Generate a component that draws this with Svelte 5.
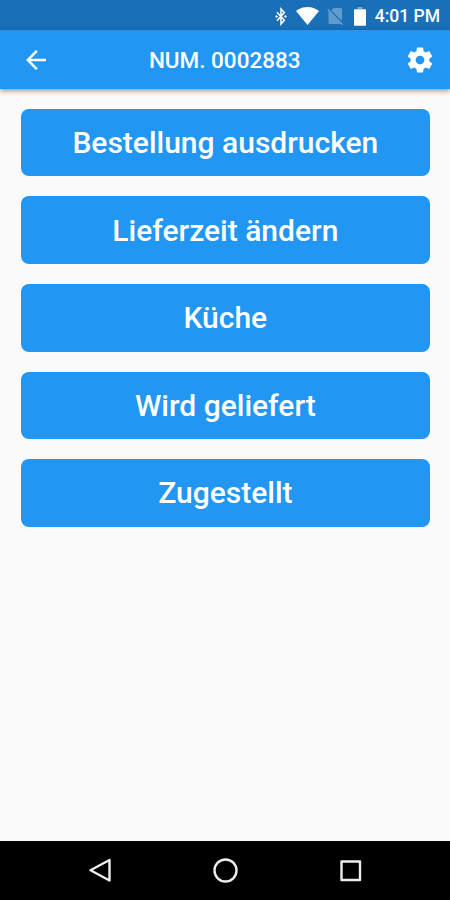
<script lang="ts">
  const orderNumber = '0002883';
  const actions = [
    'Bestellung ausdrucken',
    'Lieferzeit ändern',
    'Küche',
    'Wird geliefert',
    'Zugestellt',
  ];
</script>

<div class="screen">
  <div class="status-bar">
    <svg class="bluetooth" viewBox="0 0 12 19">
      <path class="rune" d="M2 5.2l7.3 8L6 17V2l3.3 3.6L2 13.8" />
      <path d="M1.6 8.1L3 9.5 1.6 10.9.2 9.5zM10.4 8.1l1.4 1.4-1.4 1.4L9 9.5z" />
    </svg>
    <svg class="wifi" viewBox="0 0 24 20" preserveAspectRatio="none">
      <path d="M12 20L24 4.5C23.5 4.1 19 0 12 0S.5 4.1 0 4.5L12 20z" />
    </svg>
    <svg class="no-sim" viewBox="0 0 16 19">
      <path d="M6.5 1H14a1 1 0 0 1 1 1v12L4.2 3.3zM1.5 3.6L14 16.2V17H2.5a1 1 0 0 1-1-1z" />
      <path d="M1.2 1.8L.2 2.8l15 15.4 1-1z" />
    </svg>
    <svg class="battery" viewBox="0 0 12 20">
      <path class="cap" d="M3.5 1h5v2H12v1H0V3h3.500z" />
      <path d="M0 3.500h12V19a.8.8 0 0 1-.8.800H.8A.8.8 0 0 1 0 19z" />
    </svg>
    <span class="clock">4:01 PM</span>
  </div>

  <header>
    <button class="icon-btn" aria-label="Zurück">
      <svg viewBox="0 0 24 24">
        <path d="M20 11H7.83l5.59-5.59L12 4l-8 8 8 8 1.41-1.41L7.83 13H20v-2z" />
      </svg>
    </button>
    <h1>NUM. {orderNumber}</h1>
    <button class="icon-btn" aria-label="Einstellungen">
      <svg viewBox="0 0 24 24">
        <path d="M19.43 12.98c.04-.32.07-.64.07-.98s-.03-.66-.07-.98l2.11-1.65c.19-.15.24-.42.12-.64l-2-3.46c-.12-.22-.39-.3-.61-.22l-2.49 1c-.52-.4-1.08-.73-1.69-.98l-.38-2.65C14.46 2.18 14.25 2 14 2h-4c-.25 0-.46.18-.49.42l-.38 2.65c-.61.25-1.17.59-1.69.98l-2.49-1c-.23-.09-.49 0-.61.22l-2 3.46c-.13.22-.07.49.12.64l2.11 1.65c-.04.32-.07.65-.07.98s.03.66.07.98l-2.11 1.65c-.19.15-.24.42-.12.64l2 3.46c.12.22.39.3.61.22l2.49-1c.52.4 1.08.73 1.69.98l.38 2.65c.03.24.24.42.49.42h4c.25 0 .46-.18.49-.42l.38-2.65c.61-.25 1.17-.59 1.69-.98l2.49 1c.23.09.49 0 .61-.22l2-3.46c.12-.22.07-.49-.12-.64l-2.11-1.65zM12 15.5c-1.93 0-3.5-1.57-3.5-3.5s1.57-3.5 3.5-3.5 3.5 1.57 3.5 3.5-1.57 3.5-3.5 3.5z" />
      </svg>
    </button>
  </header>

  <main>
    {#each actions as action}
      <button class="action">{action}</button>
    {/each}
  </main>

  <nav>
    <svg viewBox="0 0 26 26"><path d="M22.500 3v20.500L3.500 13.200z" /></svg>
    <svg viewBox="0 0 26 26"><circle cx="13.500" cy="13.500" r="11" /></svg>
    <svg viewBox="0 0 26 26"><rect x="4.500" y="4.500" width="18.500" height="18.500" /></svg>
  </nav>
</div>

<style>
  :global(body) {
    margin: 0;
  }
  .screen {
    display: flex;
    flex-direction: column;
    width: 450px;
    height: 900px;
    background: #fafafa;
    font-family: Roboto, 'Liberation Sans', sans-serif;
    color: #fff;
    overflow: hidden;
  }
  button {
    border: none;
    padding: 0;
    color: inherit;
    font-family: inherit;
  }
  .status-bar {
    display: flex;
    align-items: center;
    flex: none;
    box-sizing: border-box;
    height: 30px;
    padding: 2px 10px 0 0;
    justify-content: flex-end;
    background: #1a70b8;
  }
  .status-bar svg {
    flex: none;
    fill: #fff;
  }
  .bluetooth {
    width: 12px;
    height: 19px;
    margin-right: 9px;
  }
  .bluetooth .rune {
    fill: none;
    stroke: #fff;
    stroke-width: 1.5;
  }
  .wifi {
    width: 23px;
    height: 18px;
    margin-right: 8px;
  }
  .no-sim {
    width: 16px;
    height: 19px;
    margin-right: 11px;
    opacity: 0.3;
  }
  .battery {
    width: 12px;
    height: 20px;
    margin-right: 9px;
  }
  .battery .cap {
    opacity: 0.4;
  }
  .clock {
    font-size: 17.5px;
    font-weight: 500;
  }
  header {
    display: flex;
    align-items: center;
    flex: none;
    box-sizing: border-box;
    height: 59px;
    padding: 0 15px 0 20.5px;
    background: #2196f3;
    box-shadow: 0 2px 5px rgba(0, 0, 0, 0.4);
  }
  h1 {
    flex: 1;
    margin: 0 6px 0 0;
    text-align: center;
    font-size: 22.5px;
    font-weight: 500;
  }
  .icon-btn {
    display: flex;
    background: none;
  }
  .icon-btn svg {
    width: 30px;
    height: 30px;
    fill: #fff;
  }
  main {
    display: flex;
    flex-direction: column;
    flex: 1;
    gap: 20px;
    padding: 19.8px 20px 0 20.7px;
  }
  .action {
    height: 67.6px;
    border-radius: 8px;
    background: #2196f3;
    font-size: 30px;
    font-weight: 500;
  }
  nav {
    display: flex;
    align-items: center;
    justify-content: center;
    flex: none;
    height: 59.5px;
    gap: 99px;
    background: #000;
  }
  nav svg {
    width: 26px;
    height: 26px;
    fill: none;
    stroke: #eee;
    stroke-width: 2.4;
    stroke-linejoin: round;
  }
</style>
